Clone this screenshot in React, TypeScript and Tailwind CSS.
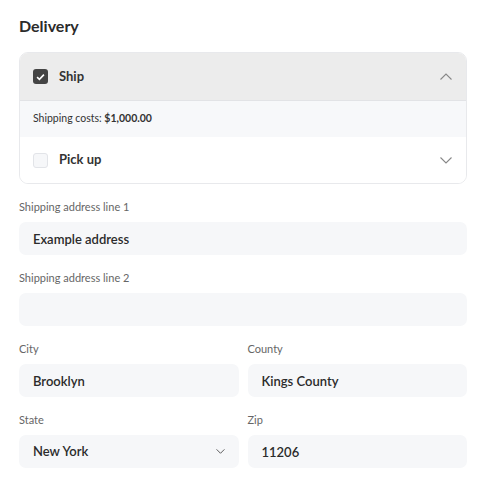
import { useState } from 'react'

const font = { fontFamily: 'Lato, "Noto Sans", sans-serif' }

function Chevron({ up, className }: { up?: boolean; className?: string }) {
  return (
    <svg viewBox="0 0 12 7" fill="none" stroke="currentColor" strokeWidth={1.1} className={className}>
      {up ? <path d="M0.5 6.5 6 1l5.5 5.5" /> : <path d="M0.5 0.5 6 6l5.5-5.5" />}
    </svg>
  )
}

function Check({ checked }: { checked: boolean }) {
  return checked ? (
    <span className="flex h-[15px] w-[15px] items-center justify-center rounded-[3px] bg-[#444444]">
      <svg viewBox="0 0 10 8" className="h-[8px] w-[9px]" fill="none" stroke="white" strokeWidth={1.8}>
        <path d="M1.2 4.2 3.8 6.6 8.8 1.4" />
      </svg>
    </span>
  ) : (
    <span className="h-[15px] w-[15px] rounded-[3px] border border-[#e2e4e8] bg-[#f6f7f9]" />
  )
}

function Field({ label, value }: { label: string; value: string }) {
  return (
    <label className="flex flex-col">
      <span className="text-[11px] leading-[14px] text-[#666]">{label}</span>
      <input
        readOnly
        value={value}
        className="mt-[8px] h-[33px] rounded-[7px] bg-[#f6f7f9] px-[14px] text-[13px] font-semibold text-[#2b2b2b] outline-none"
        style={font}
      />
    </label>
  )
}

export default function App() {
  const [method, setMethod] = useState<'ship' | 'pickup'>('ship')

  return (
    <div className="min-h-screen bg-white px-[19px] pt-[16px]" style={font}>
      <h2 className="text-[16px] font-bold leading-[20px] text-[#2b2b2b]">Delivery</h2>

      <div className="mt-[16px] overflow-hidden rounded-[9px] border border-[#e8e9ec]">
        <button
          onClick={() => setMethod('ship')}
          className="flex h-[47px] w-full items-center bg-[#ececec] pl-[13px] pr-[14px] text-left"
        >
          <Check checked={method === 'ship'} />
          <span className="ml-[11px] text-[13px] font-bold text-[#333]">Ship</span>
          <Chevron up className="ml-auto h-[7px] w-[12px] text-[#888]" />
        </button>
        <div className="flex h-[37px] items-center border-t border-[#e2e3e6] bg-[#f7f8fa] pl-[13px] text-[10.5px] text-[#333]">
          Shipping costs:&nbsp;<b className="font-bold">$1,000.00</b>
        </div>
        <button
          onClick={() => setMethod('pickup')}
          className="flex h-[46px] w-full items-center bg-white pl-[13px] pr-[14px] text-left"
        >
          <Check checked={method === 'pickup'} />
          <span className="ml-[11px] text-[13px] font-bold text-[#333]">Pick up</span>
          <Chevron className="ml-auto h-[7px] w-[12px] text-[#888]" />
        </button>
      </div>

      <div className="mt-[16px] flex flex-col gap-[16px]">
        <Field label="Shipping address line 1" value="Example address" />
        <Field label="Shipping address line 2" value="" />
        <div className="grid grid-cols-2 gap-x-[9px] gap-y-[16px]">
          <Field label="City" value="Brooklyn" />
          <Field label="County" value="Kings County" />
          <label className="flex flex-col">
            <span className="text-[11px] leading-[14px] text-[#666]">State</span>
            <div className="mt-[8px] flex h-[33px] items-center rounded-[7px] bg-[#f6f7f9] px-[14px]">
              <span className="text-[13px] font-semibold text-[#2b2b2b]">New York</span>
              <Chevron className="ml-auto h-[5px] w-[9px] text-[#333]" />
            </div>
          </label>
          <Field label="Zip" value="11206" />
        </div>
      </div>
    </div>
  )
}
